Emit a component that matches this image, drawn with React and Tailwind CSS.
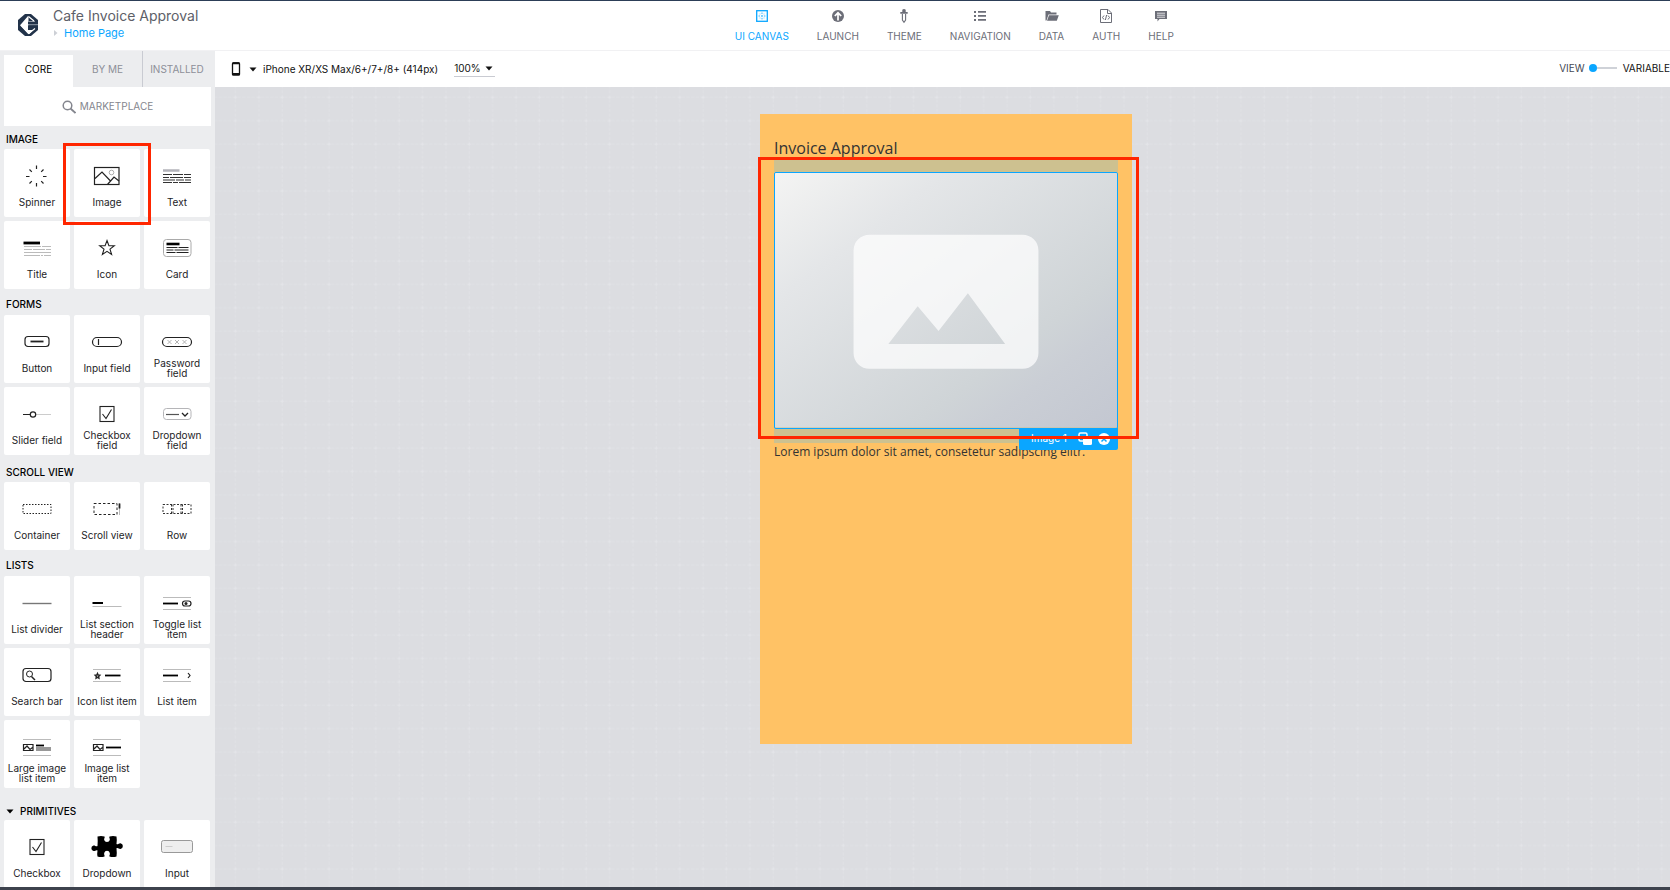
import React from "react";

const NAV = [
  ["UI CANVAS", "canvas"],
  ["LAUNCH", "launch"],
  ["THEME", "theme"],
  ["NAVIGATION", "nav"],
  ["DATA", "data"],
  ["AUTH", "auth"],
  ["HELP", "help"],
];

const NAV_ICONS = {
  canvas: (
    <g stroke="currentColor" fill="none">
      <rect x="2.700" y="2.700" width="10.600" height="10.600" strokeWidth="1.300" />
      <path d="M8 4.500v7M4.500 8h7" strokeDasharray="1.500 1.200" opacity=".8" />
      <path d="M5 6h2M9 6h2M5 10h2M9 10h2" opacity=".25" />
    </g>
  ),
  launch: (
    <g>
      <circle cx="8" cy="8" r="6" fill="currentColor" />
      <path d="M8 12.500V5M4.800 8 8 4.800 11.200 8" stroke="#fff" strokeWidth="1.700" fill="none" />
    </g>
  ),
  theme: (
    <g>
      <path d="M6.300 1.800q1.700-1.800 3.400 0V4h2v1.800H4.300V4h2z" fill="currentColor" />
      <path d="M6.400 6v6L8 14.200 9.600 12V6" stroke="currentColor" strokeWidth="1.100" fill="none" />
    </g>
  ),
  nav: <path d="M2 3h2v2H2zM2 7h2v2H2zM2 11h2v2H2zM6 3h8v1.800H6zM6 7h8v1.800H6zM6 11h8v1.800H6z" fill="currentColor" />,
  data: <path d="M1.500 3h4.500l1 1.500h5.500V6.500H4.500L2.500 12.500h-1zM5 7.300h9.800l-2 5.400H3z" fill="currentColor" />,
  auth: (
    <g stroke="currentColor" fill="none" strokeWidth="1">
      <path d="M2.500 1.500h7.500l3.500 3.500v9.500h-11zM9.500 1.500v4h4" />
      <path d="M6 7.500 4.500 9.500 6 11.500M10 7.500l1.500 2-1.500 2M8.600 7l-1.200 5" />
    </g>
  ),
  help: (
    <g>
      <path d="M2 3h12v8H6.500L4.500 13.500V11H2z" fill="currentColor" />
      <path d="M4 5.200h8M4 7.200h8M4 9.200h8" stroke="#fff" strokeWidth=".8" />
    </g>
  ),
};

const ICONS = {
  spinner: (
    <path d="M19.500 5.500v3.500M29.500 16.500h-3.500M19.500 26.500v-3.500M9 16.500h3.500M26.500 9.500l-2.300 2.300M26.500 23.500l-2.300-2.300M12.500 23.500l2.300-2.300M12.500 9.500l2.300 2.300" stroke="#222" strokeWidth="1.200" fill="none" />
  ),
  image: (
    <g stroke="#222" fill="none" strokeWidth="1.200">
      <rect x="7.500" y="7.500" width="24.500" height="17" />
      <path d="M8 18.500 15 12l9 9.500M20.500 24.500l6.500-7.500 5 4" />
      <circle cx="24.500" cy="12.500" r="2.300" stroke="#999" strokeWidth=".8" />
    </g>
  ),
  text: (
    <g>
      <path d="M6 10.500h16.500" stroke="#b3b3ba" strokeWidth="2.500" />
      <path d="M6 14.500h9m1 0h10m1 0h7M6 17.500h6m1 0h13m1 0h7M6 20h12m1 0h8m1 0h6M6 22.500h9m1 0h5m1 0h12" stroke="#333" strokeWidth="1.100" />
    </g>
  ),
  title: (
    <g>
      <path d="M6.500 11h16.500" stroke="#000" strokeWidth="2.800" />
      <path d="M7 14.500h17m1 0h9M7 17.500h8m1 0h12m1 0h5M7 20.500h27M7 23.500h16m1 0h2m1 0h7" stroke="#bbb" />
    </g>
  ),
  star: (
    <path d="m20 8.500 1.900 5.200h5.400l-4.300 3.400 1.600 5.400-4.600-3.200-4.600 3.200 1.600-5.400-4.300-3.400h5.400z" stroke="#222" fill="none" strokeWidth="1.100" />
  ),
  card: (
    <g>
      <rect x="6.500" y="7.500" width="27.500" height="17" rx="3" stroke="#aaa" fill="none" />
      <path d="M9.500 12h13" stroke="#000" strokeWidth="2.600" />
      <path d="M9.500 15.500h11m1 0h10M9.500 18h7m1 0h14M9.500 20.500h9m1 0h12" stroke="#222" strokeWidth="1.200" />
    </g>
  ),
  button: (
    <g stroke="#222" fill="none">
      <rect x="8" y="10.500" width="24" height="10" rx="3" strokeWidth="1.200" />
      <path d="M13.500 15.500h13" strokeWidth="1.800" />
    </g>
  ),
  input: (
    <g stroke="#222" fill="none" strokeWidth="1.200">
      <rect x="5.500" y="11.500" width="29" height="9" rx="4.500" />
      <path d="M11.500 13v6" />
    </g>
  ),
  password: (
    <g stroke="#222" fill="none">
      <rect x="5.500" y="11.500" width="29" height="9" rx="4.500" strokeWidth="1.200" />
      <path d="m10.500 14 4 4m0-4-4 4m7.500-4 4 4m0-4-4 4m7.500-4 4 4m0-4-4 4" stroke="#aaa" strokeWidth=".9" />
    </g>
  ),
  slider: (
    <g fill="none">
      <path d="M6 16.500h7.500" stroke="#222" />
      <path d="M19 16.500h15" stroke="#ccc" />
      <circle cx="16" cy="16.500" r="2.700" stroke="#222" strokeWidth="1.200" />
    </g>
  ),
  checkbox: (
    <g stroke="#222" fill="none">
      <rect x="13" y="8.500" width="14" height="15" strokeWidth="1.100" />
      <path d="m15.500 16 3.500 4.500 5.500-9" strokeWidth="1.100" />
    </g>
  ),
  dropdown: (
    <g fill="none">
      <rect x="6.500" y="10.500" width="27.500" height="11" rx="3" stroke="#b5b5b8" />
      <path d="M9 16.500h13" stroke="#555" strokeWidth="1.200" />
      <path d="m25 15 3 3 3-3" stroke="#222" strokeWidth="1.300" />
    </g>
  ),
  container: <rect x="6" y="11.500" width="28" height="9" stroke="#222" fill="none" strokeDasharray="1.500 1.500" />,
  scroll: (
    <g fill="none" stroke="#222">
      <rect x="7" y="10.500" width="23" height="11" strokeDasharray="2.500 2" />
      <path d="M32.500 10v12" stroke="#bbb" />
      <path d="M32.500 10.500v5" strokeWidth="1.800" />
    </g>
  ),
  row: (
    <g fill="none" stroke="#333" strokeDasharray="2 1.500">
      <rect x="6" y="11.500" width="28" height="9" />
      <path d="M14.500 11.500v9M16 11.500v9M24 11.500v9M25.500 11.500v9" />
    </g>
  ),
  divider: <path d="M5.500 16.500h29" stroke="#777" strokeWidth="1.400" />,
  section: (
    <g>
      <path d="M5.500 16h10.500" stroke="#000" strokeWidth="2" />
      <path d="M5.500 19.500h29" stroke="#bbb" />
    </g>
  ),
  toggle: (
    <g fill="none">
      <path d="M6 10.500h28M6 22.500h28" stroke="#bbb" />
      <path d="M6 16.500h15" stroke="#000" strokeWidth="1.800" />
      <rect x="25.500" y="14" width="8.500" height="5" rx="2.500" stroke="#222" strokeWidth="1.200" />
      <circle cx="29" cy="16.500" r="1.500" fill="#222" />
    </g>
  ),
  search: (
    <g fill="none" stroke="#222">
      <rect x="6" y="9.500" width="28" height="13" rx="3" strokeWidth="1.200" />
      <circle cx="12.500" cy="15" r="3" />
      <path d="m14.500 17.500 3.500 3.500" strokeWidth="1.500" />
    </g>
  ),
  iconlist: (
    <g fill="none">
      <path d="M6 10.500h28M6 22.500h28" stroke="#bbb" />
      <path d="M18 16.500h15.500" stroke="#000" strokeWidth="1.800" />
      <path d="m10.500 14.500.7 1.500 1.600.2-1.200 1.200.3 1.700-1.400-.8-1.400.8.3-1.700-1.200-1.200 1.600-.2z" stroke="#222" strokeWidth="1.400" />
    </g>
  ),
  list: (
    <g fill="none">
      <path d="M6 10.500h28M6 22.500h28" stroke="#bbb" />
      <path d="M6 16.500h15" stroke="#000" strokeWidth="1.800" />
      <path d="m31 14 2 2.500-2 2.500" stroke="#222" strokeWidth="1.200" />
    </g>
  ),
  largeimage: (
    <g fill="none">
      <path d="M6 8.500h28M6 24.500h28" stroke="#bbb" />
      <path d="M6.500 13.500h9.500v6H6.500zM7 18l3-3 3 3.500 2.500-2" stroke="#222" strokeWidth="1.200" />
      <path d="M19 17h15M19 19h15" stroke="#777" strokeWidth="1.400" />
      <path d="M19 14.500h8" stroke="#000" strokeWidth="1.800" />
    </g>
  ),
  imagelist: (
    <g fill="none">
      <path d="M6 8.500h28M6 24.500h28" stroke="#bbb" />
      <path d="M6.500 13.500h9.500v6H6.500zM7 18l3-3 3 3.500 2.500-2" stroke="#222" strokeWidth="1.200" />
      <path d="M19 16.500h15" stroke="#000" strokeWidth="1.800" />
    </g>
  ),
  puzzle: (
    <path
      d="M10.500 5.500q3.500-1.200 7 0c.8.800-.7 2-.3 3.400a2.900 2.900 0 0 0 5.600 0c.4-1.400-1.100-2.600-.3-3.400q3.500-1.200 7 0 .600 3.500 0 7.500c1.500.9 2.300-1 4-.8a2.900 2.900 0 0 1 0 5.700c-1.700.2-2.500-1.500-4-.6q.5 4.500 0 8.200-3.500 1-7 0c-.6-.8.800-2 .3-3.600a2.900 2.900 0 0 0-5.600 0c-.5 1.600.9 2.800.3 3.600q-3.500 1-7 0-.6-2.500 0-6c-1.500-1-2.300.8-4 .5a2.900 2.900 0 0 1 0-5.600c1.700-.2 2.500 1.400 4 .5q.4-5.500 0-9.400z"
      fill="#000"
    />
  ),
  inputbox: (
    <g>
      <rect x="4.500" y="9.500" width="31" height="12" rx="2" fill="#eee" stroke="#999" />
      <path d="M8.500 15.500h7" stroke="#ccc" />
    </g>
  ),
};

const GROUPS = [
  ["IMAGE", "h-[23px] pt-0.5", [["Spinner", "spinner"], ["Image", "image"], ["Text", "text"], ["Title", "title"], ["Icon", "star"], ["Card", "card"]]],
  ["FORMS", "h-[26px] pt-1", [["Button", "button"], ["Input field", "input"], ["Password field", "password"], ["Slider field", "slider"], ["Checkbox field", "checkbox"], ["Dropdown field", "dropdown"]]],
  ["SCROLL VIEW", "h-[27px] pt-1.5", [["Container", "container"], ["Scroll view", "scroll"], ["Row", "row"]]],
  ["LISTS", "h-[26px] pt-1", [["List divider", "divider"], ["List section header", "section"], ["Toggle list item", "toggle"], ["Search bar", "search"], ["Icon list item", "iconlist"], ["List item", "list"], ["Large image list item", "largeimage"], ["Image list item", "imagelist"]]],
  ["PRIMITIVES", "h-8 pt-3.5", [["Checkbox", "checkbox"], ["Dropdown", "puzzle"], ["Input", "inputbox"]]],
];

function Caret({ className }) {
  return (
    <svg viewBox="0 0 8 5" className={className} aria-hidden="true">
      <path d="M.5.5h7L4 4.500z" fill="currentColor" />
    </svg>
  );
}

function Tile({ label, icon }) {
  return (
    <div className="relative">
      <button type="button" className="flex h-[68px] w-full flex-col items-center rounded-xs bg-white pt-[11px]">
        <svg viewBox="0 0 40 32" className="h-8 w-10 shrink-0" aria-hidden="true">
          {ICONS[icon]}
        </svg>
        <span className="flex h-5 items-center text-center text-[10px] leading-[10px] text-[#1d1d1f]">{label}</span>
      </button>
      {label === "Image" && (
        <div className="pointer-events-none absolute -top-1.5 -left-[11px] z-10 h-[82px] w-[88px] border-3 border-[#ff2600]" />
      )}
    </div>
  );
}

function Header() {
  return (
    <header className="flex h-[50px] shrink-0 border-t border-t-[#2c3e57] bg-white">
      <div className="flex w-[44%] shrink-0 gap-[15px] pl-[18px]">
        <svg viewBox="0 0 20 22" className="mt-[13px] h-[22px] w-5" aria-label="Logo" role="img">
          <path d="M7 0h6l7 6v10l-7 6H7l-7-6V6z" fill="#22334a" />
          <path d="M10.500 2.500v4.500H17v1.300h-6.500v5h7.500L11.500 20 10 19.500 2.300 11 10 2z" fill="#fff" />
          <path d="M10 7.500h10v2.700H10zM10 11.200h10v2.300l-3.500 2.500H10z" fill="#22334a" />
          <path d="M10 10.700h10" stroke="#9aa5b1" strokeWidth=".9" />
          <path d="m10.500 2.500 5.500 4.500M2.600 11l8 8.500 6.400-5" stroke="#fff" strokeWidth="1.200" fill="none" />
        </svg>
        <div className="pt-1.5">
          <h1 className="text-[14px] leading-[18px] text-[#5d6068]">Cafe Invoice Approval</h1>
          <a href="#home" className="flex items-center gap-1.5 text-[11px] leading-4 text-[#0aa6ff]">
            <svg viewBox="0 0 5 6" className="h-1.5 w-[5px] text-[#cdd0d6]" aria-hidden="true">
              <path d="M1 0v6l3.500-3z" fill="currentColor" />
            </svg>
            Home Page
          </a>
        </div>
      </div>
      <nav className="flex gap-7 pt-[7px]">
        {NAV.map(([label, icon]) => (
          <a
            key={label}
            href={"#" + icon}
            className={
              "flex flex-col items-center gap-1 text-[10px] leading-4 whitespace-nowrap " +
              (icon === "canvas" ? "text-[#0aa6ff]" : "text-[#6c6e78]")
            }
          >
            <svg viewBox="0 0 16 16" className="size-4" aria-hidden="true">
              {NAV_ICONS[icon]}
            </svg>
            {label}
          </a>
        ))}
      </nav>
    </header>
  );
}

function Sidebar() {
  return (
    <aside className="flex w-[215px] shrink-0 flex-col overflow-hidden bg-[#ecedef] pl-1">
      <div className="flex h-9 shrink-0 text-[10px] text-[#8d8f98]">
        <button type="button" className="mt-1 w-[69px] bg-white pb-1 text-black">CORE</button>
        <button type="button" className="w-[70px] border-r border-[#c9cbd2]">BY ME</button>
        <button type="button" className="flex-1 pr-1">INSTALLED</button>
      </div>
      <button type="button" className="mr-1 flex h-[39px] shrink-0 items-center justify-center gap-1 bg-white text-[10px] text-[#84868e]">
        <svg viewBox="0 0 14 14" className="size-3.5" fill="none" stroke="currentColor" aria-hidden="true">
          <circle cx="5.500" cy="5.500" r="4.300" strokeWidth="1.500" />
          <path d="m8.500 8.500 5 4.500" strokeWidth="1.800" />
        </svg>
        MARKETPLACE
      </button>
      <div className="mr-[5px] shrink-0">
        {GROUPS.map(([title, spacing, items]) => (
          <section key={title}>
            <h2 className={"flex items-center gap-1.5 pl-0.5 text-[10px] leading-none font-medium text-black " + spacing}>
              {title === "PRIMITIVES" && <Caret className="h-[5px] w-2" />}
              {title}
            </h2>
            <div className="grid grid-cols-3 gap-1">
              {items.map(([label, icon]) => (
                <Tile key={label} label={label} icon={icon} />
              ))}
            </div>
          </section>
        ))}
      </div>
    </aside>
  );
}

function Toolbar() {
  return (
    <div className="flex h-9 shrink-0 items-center bg-white text-[10px] text-[#111]">
      <button type="button" className="ml-4 flex items-center">
        <svg viewBox="0 0 10 14" className="mr-2 h-3.5 w-2.5" aria-hidden="true">
          <rect x="1.500" y=".8" width="7" height="12.400" rx="1" fill="#fff" stroke="#111" strokeWidth="1.300" />
          <path d="M1.500 1.300h7M1.500 12h7" stroke="#111" strokeWidth="2" />
        </svg>
        <Caret className="mr-1.5 h-[5px] w-2" />
        iPhone XR/XS Max/6+/7+/8+ (414px)
      </button>
      <button type="button" className="ml-4 flex items-center gap-1 border-b border-[#c9cbd2] pr-0.5">
        100%
        <Caret className="h-[5px] w-2" />
      </button>
      <div className="ml-auto flex items-center pb-0.5 whitespace-nowrap">
        <span className="mr-1 text-[#444854]">VIEW</span>
        <span className="size-2 rounded-full bg-[#0aa6ff]" />
        <span className="mr-1.5 h-0.5 w-5 bg-[#cfd2d8]" />
        <span>VARIABLE</span>
      </div>
    </div>
  );
}

function Canvas() {
  return (
    <main className="relative flex flex-1 justify-center overflow-hidden bg-[#dcdde1] pt-[27px] pl-[7px]">
      <svg className="absolute inset-0 size-full" aria-hidden="true">
        <defs>
          <pattern id="grid" width="23.380" height="23.380" patternUnits="userSpaceOnUse" x="8.500" y="-1.500">
            <path d="M0 12h23.380M12 0v23.380" stroke="#e0e1e5" strokeWidth="1" strokeDasharray="3 1.700" fill="none" />
            <path d="M10.500 12h3M12 10.500v3" stroke="#e4e5e9" strokeWidth="1" />
          </pattern>
        </defs>
        <rect width="100%" height="100%" fill="url(#grid)" />
      </svg>
      <div className="relative h-[630px] w-[372px] bg-[#ffc265] px-3.5 pt-[22px] font-['Open_Sans',sans-serif] text-[#333]">
        <h2 className="text-[16px] leading-6">Invoice Approval</h2>
        <div className="relative bg-[#cdc190] pt-3 pb-3.5">
          <svg viewBox="0 0 344 256" className="block w-full rounded-xs border border-[#0aa6ff]" role="img" aria-label="Image placeholder">
            <defs>
              <linearGradient id="shade" x1="0" y1="0" x2="1" y2="1">
                <stop offset="0" stopColor="#f4f4f3" />
                <stop offset=".25" stopColor="#e4e6e8" />
                <stop offset=".7" stopColor="#cfd4d7" />
                <stop offset=".8" stopColor="#caced5" />
                <stop offset="1" stopColor="#c3c7d1" />
              </linearGradient>
            </defs>
            <rect width="344" height="256" fill="url(#shade)" />
            <path
              d="M95 62h154a16 16 0 0 1 16 16v103a16 16 0 0 1-16 16H95a16 16 0 0 1-16-16V78a16 16 0 0 1 16-16zM114 172h117.500L194 121l-29.500 38L143.500 134z"
              fill="#fff"
              fillOpacity=".72"
              fillRule="evenodd"
            />
          </svg>
          <div className="absolute right-0 bottom-[-7px] flex h-[22px] w-[99px] items-center rounded-b-xs bg-[#0aa6ff] pl-3 font-[Inter,sans-serif] text-[10px] text-white">
            <span className="flex-1">Image 1</span>
            <button type="button" aria-label="Duplicate" className="mr-1.5">
              <svg viewBox="0 0 14 13" className="h-[13px] w-3.5" aria-hidden="true">
                <rect x="1" y="1" width="8" height="8" rx="1.500" fill="none" stroke="#fff" strokeWidth="1.500" />
                <rect x="5" y="4" width="9" height="9" rx="1.500" fill="#fff" />
              </svg>
            </button>
            <button type="button" aria-label="Remove" className="mr-2">
              <svg viewBox="0 0 12 12" className="size-3" aria-hidden="true">
                <circle cx="6" cy="6" r="6" fill="#fff" />
                <path d="m3.500 3.500 5 5m0-5-5 5" stroke="#0aa6ff" strokeWidth="1.500" />
              </svg>
            </button>
          </div>
        </div>
        <p className="text-[12px] leading-[18px] whitespace-nowrap">Lorem ipsum dolor sit amet, consetetur sadipscing elitr.</p>
        <div className="pointer-events-none absolute top-[43px] -left-0.5 h-[282px] w-[381px] border-3 border-[#ff2600]" />
      </div>
    </main>
  );
}

export default function App() {
  return (
    <div className="flex h-screen flex-col overflow-hidden border-b-3 border-[#3d424d] bg-white font-[Inter,sans-serif]">
      <Header />
      <div className="flex min-h-0 flex-1 border-t border-[#f1f1f3]">
        <Sidebar />
        <div className="flex min-w-0 flex-1 flex-col">
          <Toolbar />
          <Canvas />
        </div>
      </div>
    </div>
  );
}
